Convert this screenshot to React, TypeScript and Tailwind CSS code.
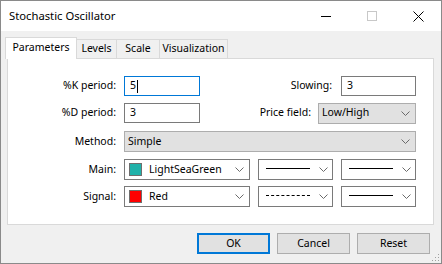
import React from "react";

const Chevron = () => (
  <svg width="9" height="5" viewBox="0 0 9 5" className="shrink-0">
    <path d="M0.5 0.5 L4.5 4.5 L8.5 0.5" fill="none" stroke="#6a6a6a" strokeWidth="1" />
  </svg>
);

const Label = ({ children, w }: { children: React.ReactNode; w: string }) => (
  <div className={`${w} text-right pr-[8px] shrink-0`}>{children}</div>
);

const LineCombo = ({ dashed }: { dashed?: boolean }) => (
  <div className="w-[75px] h-[21px] border border-[#7a7a7a] bg-white flex items-center pl-[7px] pr-[4px]">
    <div className={`w-[44px] h-0 border-t ${dashed ? "border-dashed" : "border-solid"} border-black -mt-[2px]`} />
    <div className="flex-1" />
    <Chevron />
  </div>
);

export default function App() {
  return (
    <div
      className="relative w-[442px] h-[264px] border border-[#8a8a8a] bg-[#f0f0f0] flex flex-col text-[10.5px] text-black overflow-hidden"
      style={{ fontFamily: '"Segoe UI", "Noto Sans", sans-serif' }}
    >
      {/* Title bar */}
      <div className="h-[30px] bg-white flex items-center shrink-0">
        <div className="pl-[8px] flex-1 text-[11.25px]">Stochastic Oscillator</div>
        <div className="flex items-center h-full">
          <div className="w-[46px] h-full flex items-center justify-center">
            <div className="w-[10px] h-0 border-t border-black" />
          </div>
          <div className="w-[46px] h-full flex items-center justify-center">
            <div className="w-[10px] h-[10px] border border-[#c8c8c8]" />
          </div>
          <div className="w-[46px] h-full flex items-center justify-center">
            <svg width="11" height="11" viewBox="0 0 11 11">
              <path d="M0.5 0.5 L10.5 10.5 M10.5 0.5 L0.5 10.5" stroke="#000" strokeWidth="1" />
            </svg>
          </div>
        </div>
      </div>

      {/* Body */}
      <div className="flex-1 flex flex-col px-[6px] pt-[6px]">
        {/* Tabs */}
        <div className="flex items-end h-[21px] relative z-10 -ml-[2px]">
          <div className="w-[72px] h-[22px] bg-white border border-[#d9d9d9] border-b-0 flex items-center justify-center -mb-[1px] pb-[2px]">
            Parameters
          </div>
          <div className="w-[40px] h-[19px] bg-[#f0f0f0] border border-[#d9d9d9] border-b-0 border-l-0 flex items-center justify-center">
            Levels
          </div>
          <div className="w-[43px] h-[19px] bg-[#f0f0f0] border border-[#d9d9d9] border-b-0 border-l-0 flex items-center justify-center">
            Scale
          </div>
          <div className="w-[68px] h-[19px] bg-[#f0f0f0] border border-[#d9d9d9] border-b-0 border-l-0 flex items-center justify-center">
            Visualization
          </div>
        </div>

        {/* Panel */}
        <div className="h-[167px] w-[427px] bg-white border border-[#d9d9d9] flex flex-col pt-[17px] gap-[7px]">
          {/* Row 1 */}
          <div className="flex items-center h-[20px]">
            <Label w="w-[116px]">%K period:</Label>
            <div className="w-[76px] h-[20px] border border-[#0078d7] flex items-center pl-[5px]">
              <span>5</span>
              <span className="w-px h-[13px] bg-black ml-[1px]" />
            </div>
            <div className="flex-1 text-right pr-[9px]">Slowing:</div>
            <div className="w-[75px] h-[20px] border border-[#7a7a7a] flex items-center pl-[5px] mr-[17px]">3</div>
          </div>
          {/* Row 2 */}
          <div className="flex items-center h-[20px]">
            <Label w="w-[116px]">%D period:</Label>
            <div className="w-[76px] h-[20px] border border-[#7a7a7a] flex items-center pl-[5px]">3</div>
            <div className="flex-1 text-right pr-[7px]">Price field:</div>
            <div className="w-[98px] h-[21px] border border-[#adadad] bg-[#e1e1e1] flex items-center justify-between pl-[3px] pr-[5px] mr-[17px]">
              <span>Low/High</span>
              <Chevron />
            </div>
          </div>
          {/* Row 3 */}
          <div className="flex items-center h-[21px] mt-[1px]">
            <Label w="w-[116px]">Method:</Label>
            <div className="w-[292px] h-[21px] border border-[#adadad] bg-[#e1e1e1] flex items-center justify-between pl-[3px] pr-[5px]">
              <span>Simple</span>
              <Chevron />
            </div>
          </div>
          {/* Row 4 */}
          <div className="flex items-center h-[21px]">
            <Label w="w-[116px]">Main:</Label>
            <div className="w-[126px] h-[21px] border border-[#7a7a7a] bg-white flex items-center pl-[4px] pr-[5px]">
              <div className="w-[13px] h-[13px] border border-[#6e6e6e] bg-[#20b2aa] shrink-0" />
              <span className="ml-[7px] flex-1 whitespace-nowrap">LightSeaGreen</span>
              <Chevron />
            </div>
            <div className="ml-[8px]"><LineCombo /></div>
            <div className="ml-[8px]"><LineCombo /></div>
          </div>
          {/* Row 5 */}
          <div className="flex items-center h-[21px] -mt-[1px]">
            <Label w="w-[116px]">Signal:</Label>
            <div className="w-[126px] h-[21px] border border-[#7a7a7a] bg-white flex items-center pl-[4px] pr-[5px]">
              <div className="w-[13px] h-[13px] border border-[#6e6e6e] bg-[#ff0000] shrink-0" />
              <span className="ml-[7px] flex-1">Red</span>
              <Chevron />
            </div>
            <div className="ml-[8px]"><LineCombo dashed /></div>
            <div className="ml-[8px]"><LineCombo /></div>
          </div>
        </div>

        {/* Buttons */}
        <div className="flex justify-end gap-[7px] mt-[8px] pr-[5px]">
          <div className="w-[73px] h-[21px] border-2 border-[#0078d7] bg-[#e1e1e1] flex items-center justify-center">OK</div>
          <div className="w-[73px] h-[21px] border border-[#adadad] bg-[#e1e1e1] flex items-center justify-center">Cancel</div>
          <div className="w-[73px] h-[21px] border border-[#adadad] bg-[#e1e1e1] flex items-center justify-center">Reset</div>
        </div>
      </div>

      {/* Resize grip */}
      <svg className="absolute right-[1px] bottom-[1px]" width="8" height="8" viewBox="0 0 8 8">
        <rect x="6" y="0" width="1" height="1" fill="#a0a0a0" />
        <rect x="3" y="3" width="1" height="1" fill="#a0a0a0" />
        <rect x="6" y="3" width="1" height="1" fill="#a0a0a0" />
        <rect x="0" y="6" width="1" height="1" fill="#a0a0a0" />
        <rect x="3" y="6" width="1" height="1" fill="#a0a0a0" />
        <rect x="6" y="6" width="1" height="1" fill="#a0a0a0" />
      </svg>
    </div>
  );
}
